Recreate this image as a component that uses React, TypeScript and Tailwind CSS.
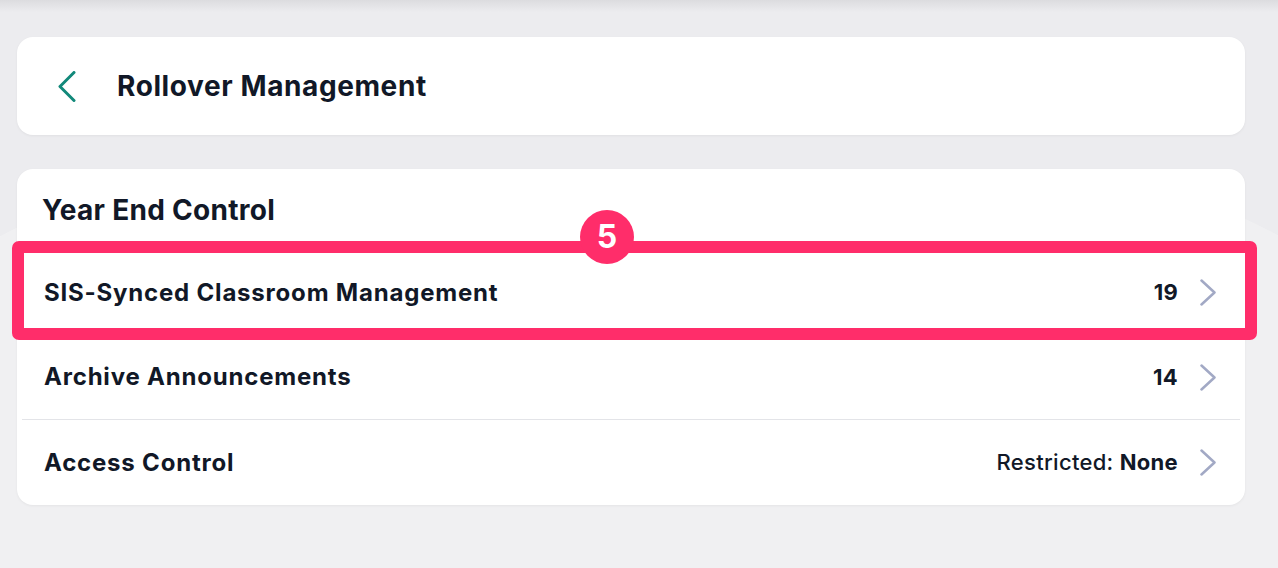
const rows = [
  { label: 'SIS-Synced Classroom Management', value: <span className="font-bold">19</span> },
  { label: 'Archive Announcements', value: <span className="font-bold">14</span> },
  {
    label: 'Access Control',
    value: (
      <span>
        <span className="font-medium">Restricted: </span>
        <span className="font-bold">None</span>
      </span>
    ),
  },
];

function BackChevron() {
  return (
    <svg width="18" height="31" viewBox="0 0 18 31" fill="none">
      <polyline
        points="16,1.5 2,15.5 16,29.5"
        stroke="#12897a"
        strokeWidth="3"
        strokeLinecap="round"
        strokeLinejoin="round"
      />
    </svg>
  );
}

function RowChevron() {
  return (
    <svg width="16" height="27" viewBox="0 0 16 27" fill="none">
      <polyline
        points="1.5,1.5 14.5,13.5 1.5,25.5"
        stroke="#a2a9c5"
        strokeWidth="2.5"
        strokeLinecap="round"
        strokeLinejoin="round"
      />
    </svg>
  );
}

export default function App() {
  return (
    <div
      className="relative h-[568px] overflow-hidden bg-[#ececef] pl-[17px] pr-[33px] pt-[37px] text-[#111827]"
      style={{ fontFamily: 'Inter, "Noto Sans", sans-serif' }}
    >
      {/* top shade */}
      <div className="absolute inset-x-0 top-0 h-[12px] bg-gradient-to-b from-[#dcdcdf] to-transparent" />
      {/* faint background swoosh */}
      <div className="absolute left-[-260px] top-[175px] h-[1000px] w-[1800px] rounded-full bg-[#f2f2f4] opacity-70" />

      {/* Header */}
      <div className="relative flex h-[98px] items-center rounded-2xl bg-white pl-[41px] shadow-[0_1px_3px_rgba(0,0,0,0.05)]">
        <BackChevron />
        <h1 className="ml-[41px] text-[28px] font-bold tracking-[0.6px]">Rollover Management</h1>
      </div>

      {/* Year End Control */}
      <div className="relative mt-[34px] rounded-2xl bg-white shadow-[0_1px_3px_rgba(0,0,0,0.05)]">
        <div className="flex h-[81px] items-center pl-[25px] pt-[1px]">
          <h2 className="text-[28px] font-bold tracking-[0.3px]">Year End Control</h2>
        </div>
        {rows.map((row, idx) => (
          <div
            key={row.label}
            className={`mx-[5px] flex h-[85px] items-center pl-[22px] pr-[24px] ${
              idx === 1 ? 'border-b border-[#e3e4e8]' : ''
            }`}
          >
            <span className="text-[24px] font-bold tracking-[0.8px]">{row.label}</span>
            <div className="ml-auto flex items-center gap-[22px] text-[22px] tracking-[0.3px]">
              {row.value}
              <RowChevron />
            </div>
          </div>
        ))}

        {/* highlight annotation */}
        <div className="pointer-events-none absolute left-[-5px] top-[72px] h-[99px] w-[1245px] rounded-[7px] border-[12px] border-[#ff2d6a]" />
        <div className="pointer-events-none absolute left-[563px] top-[41px] flex h-[54px] w-[54px] items-center justify-center rounded-full bg-[#ff2d6a] text-[32px] font-bold text-white">
          5
        </div>
      </div>
    </div>
  );
}
